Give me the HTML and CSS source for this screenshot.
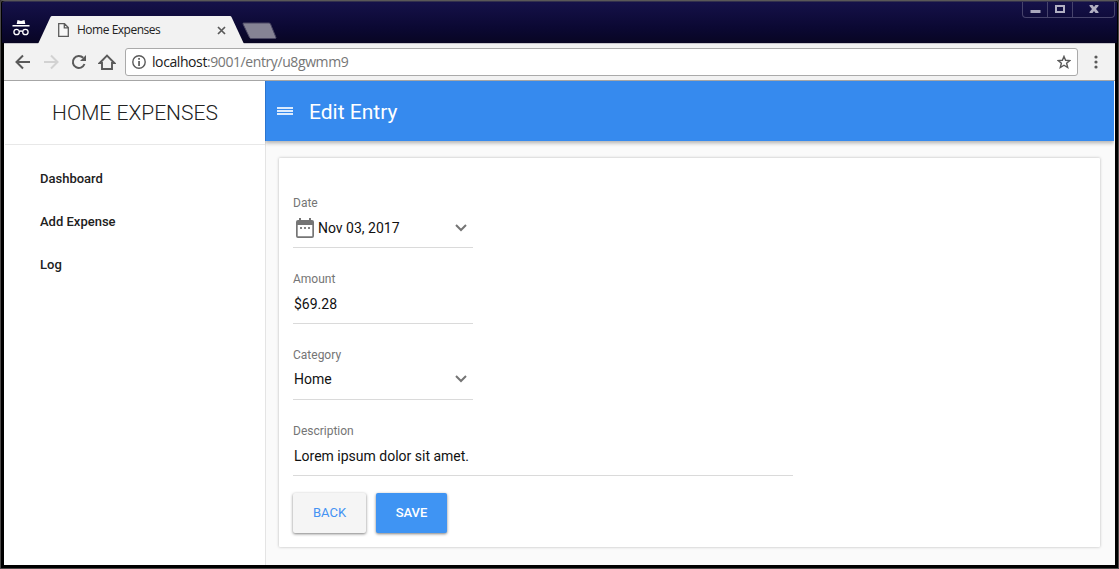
FILE: index.html
```html
<!DOCTYPE html>
<html lang="en">
<head>
<meta charset="utf-8">
<title>Home Expenses</title>
<link rel="stylesheet" href="styles.css">
</head>
<body>
<div class="window">
  <div class="titlebar">
    <svg class="incognito" width="18" height="18" viewBox="0 0 18 18"><path d="M5.500 1l3.500 1 3.500-1 .8 4H4.700zM0.500 6h17v1.500H0.500z" fill="#fff"/><g fill="none" stroke="#fff" stroke-width="1.300"><circle cx="4.600" cy="13" r="2.700"/><circle cx="13.400" cy="13" r="2.700"/><path d="M7.300 12.500q1.700-1 3.400 0"/></g></svg>
    <div class="tab">
      <svg class="tab-shape" width="206" height="28" viewBox="0 0 206 28"><path d="M0 28L12.500 1Q13 0 14 0H192Q193 0 193.500 1L206 28z" fill="#f2f2f2"/></svg>
      <svg class="page-icon" width="11" height="14" viewBox="0 0 11 14"><path d="M.7.700H6.500L10.300 4.500V13.300H.7zM6.300.700V4.800H10.300" fill="#f8f8f8" stroke="#5c5c5c" stroke-width="1.300"/></svg>
      <span class="tab-title">Home Expenses</span>
      <svg class="tab-close" width="9" height="9" viewBox="0 0 9 9"><path d="M1 1l7 7M8 1L1 8" stroke="#5a5a5a" stroke-width="1.700"/></svg>
    </div>
    <svg class="new-tab" width="35" height="18" viewBox="0 0 35 18"><path d="M1.500 1H27Q28 1 28.500 2L34 15.500Q34 16.500 33 16.500H9Q8 16.500 7.500 15.500L1 2Q.800 1 1.500 1z" fill="#858394" stroke="#4a4763"/></svg>
    <div class="controls">
      <span class="control"><svg class="minimize" width="11" height="9" viewBox="0 0 11 9"><path d="M0.500 6h10v3h-10z" fill="#a9a7bd"/></svg></span>
      <span class="control"><svg width="10" height="8" viewBox="0 0 10 8"><path d="M1 1h8v6H1z" fill="none" stroke="#b1afc2" stroke-width="2"/></svg></span>
      <span class="control wide"><svg width="10" height="8" viewBox="0 0 10 8"><path d="M0.500 0h3L5 2l1.500-2h3v1L7 4l2.500 3v1h-3L5 6 3.500 8h-3V7L3 4 .5 1z" fill="#b1afc2"/></svg></span>
    </div>
  </div>
  <div class="toolbar">
    <svg class="back" width="16" height="16" viewBox="0 0 16 16"><path d="M15 8H2M8 1.500L1.500 8 8 14.500" fill="none" stroke="#5a5a5a" stroke-width="2"/></svg>
    <svg class="forward" width="16" height="16" viewBox="0 0 16 16"><path d="M1 8h13M8 1.500L14.500 8 8 14.500" fill="none" stroke="#d2d2d2" stroke-width="2"/></svg>
    <svg class="reload" width="16" height="16" viewBox="0 0 16 16"><path d="M13.500 10A6 6 0 1 1 12.200 3.800" fill="none" stroke="#5a5a5a" stroke-width="2"/><path d="M15 1v6H9z" fill="#5a5a5a"/></svg>
    <svg class="home" width="18" height="17" viewBox="0 0 18 17"><path d="M1.700 9L9 1.700 16.300 9H14V15H4V9z" fill="none" stroke="#5a5a5a" stroke-width="1.900"/></svg>
    <div class="address">
      <svg class="info" width="14" height="14" viewBox="0 0 14 14"><circle cx="7" cy="7" r="6.200" fill="none" stroke="#5a5a5a" stroke-width="1.400"/><path d="M6.200 3h1.700v1.700H6.200zM6.200 6h1.700v5H6.200z" fill="#5a5a5a"/></svg>
      <span class="url"><b>localhost</b>:9001/entry/u8gwmm9</span>
      <svg class="star" width="14" height="14" viewBox="0 0 14 14"><path d="M7 1.400L8.600 5.300 12.800 5.600 9.600 8.300 10.700 12.500 7 10.200 3.300 12.500 4.400 8.300 1.200 5.600 5.400 5.300z" fill="none" stroke="#5a5a5a" stroke-width="1.400"/></svg>
    </div>
    <svg class="more" width="4" height="14" viewBox="0 0 4 14"><g fill="#5a5a5a"><circle cx="2" cy="2" r="1.600"/><circle cx="2" cy="7" r="1.600"/><circle cx="2" cy="12" r="1.600"/></g></svg>
  </div>
  <div class="app">
    <nav class="sidebar">
      <div class="brand"><span class="brand-name">HOME EXPENSES</span></div>
      <a class="nav-link">Dashboard</a>
      <a class="nav-link">Add Expense</a>
      <a class="nav-link">Log</a>
    </nav>
    <main class="main">
      <header class="header">
        <svg class="menu" width="16" height="8" viewBox="0 0 16 8"><path d="M0 0h16v2H0zM0 3h16v2H0zM0 6h16v2H0z" fill="#dcebfd"/></svg>
        <h1 class="page-title">Edit Entry</h1>
      </header>
      <section class="card">
        <div class="field">
          <div class="label">Date</div>
          <div class="value"><svg class="calendar" width="18" height="20" viewBox="0 0 18 20"><path d="M3 0h2v2h8V0h2v2h1q2 0 2 2v14q0 2-2 2H2q-2 0-2-2V4q0-2 2-2h1zM1.700 7v11.300h14.600V7z" fill="#757575" fill-rule="evenodd"/><path d="M4 9h2v2H4zM8 9h2v2H8zM12 9h2v2h-2z" fill="#858585"/></svg><span class="date-text">Nov 03, 2017</span><svg class="chevron" width="12" height="8" viewBox="0 0 12 8"><path d="M1 1l5 5 5-5" fill="none" stroke="#757575" stroke-width="2"/></svg></div>
        </div>
        <div class="field">
          <div class="label">Amount</div>
          <div class="value"><span class="amount-text">$69.28</span></div>
        </div>
        <div class="field">
          <div class="label">Category</div>
          <div class="value raised"><span>Home</span><svg class="chevron" width="12" height="8" viewBox="0 0 12 8"><path d="M1 1l5 5 5-5" fill="none" stroke="#757575" stroke-width="2"/></svg></div>
        </div>
        <div class="field long">
          <div class="label">Description</div>
          <div class="value"><span class="description-text">Lorem ipsum dolor sit amet.</span></div>
        </div>
        <div class="actions"><button class="button secondary">BACK</button><button class="button primary">SAVE</button></div>
      </section>
    </main>
  </div>
</div>
</body>
</html>
```

FILE: styles.css
```css
* { box-sizing: border-box; }
body { margin: 0; background: #3a3836; font-family: Roboto, sans-serif; overflow: hidden; }
svg { display: block; flex: none; }
.window { width: 1119px; height: 569px; padding: 0 3px 3px; background: #000; border: 1px solid #4b4949; border-top-color: #5a5858; border-radius: 3px 3px 0 0; }
.titlebar { height: 42px; margin: 0 -2px; padding-left: 2px; display: flex; background: linear-gradient(#151149, #0b0832 65%, #080523); border-top: 1px solid #33304e; border-radius: 3px 3px 0 0; }
.incognito { margin: 17px 0 0 8px; }
.tab { position: relative; width: 206px; height: 28px; margin: 14px 0 0 8px; display: flex; align-items: center; padding: 0 0 0 20px; }
.tab-shape { position: absolute; left: 0; top: 0; }
.page-icon, .tab-title, .tab-close { position: relative; }
.tab-title { font: 12px/16px "Open Sans", sans-serif; letter-spacing: -.48px; color: #222; width: 140px; margin-left: 8px; white-space: nowrap; }
.new-tab { margin: 20px 0 0 -2px; }
.controls { display: flex; height: 16px; margin: 0 2px 0 auto; border: 1px solid #47446c; border-top: 0; border-radius: 0 0 4px 4px; }
.control { width: 25px; display: flex; justify-content: center; padding-top: 3px; border-right: 1px solid #47446c; }
.control.wide { width: 41px; border: 0; }
.minimize { margin-top: -1px; }
.toolbar { height: 38px; display: flex; background: #f2f2f2; border-top: 1px solid #c8c6cc; border-bottom: 1px solid #a6a6a6; }
.back { margin: 10px 0 0 11px; }
.forward { margin: 10px 0 0 12px; }
.reload { margin: 10px 0 0 12px; }
.home { margin: 10px 0 0 11px; }
.address { width: 953px; height: 28px; margin: 4px 0 0 9px; display: flex; align-items: center; background: #fff; border: 1px solid #aaa; border-radius: 3px; padding: 0 6px; }
.info { margin-right: 6px; }
.url { font: 14px/20px "Open Sans", sans-serif; letter-spacing: -.41px; color: #767676; white-space: nowrap; }
.url b { font-weight: 400; color: #202020; }
.star { margin-left: auto; }
.more { margin: 11px 0 0 16px; }
.app { display: flex; height: 484px; background: #fafafa; border-left: 1px solid #fff; }
.sidebar { width: 261px; flex: none; background: #fff; border-right: 1px solid #e4e4e4; }
.brand { height: 64px; border-bottom: 1px solid #e8e8e8; text-align: center; padding-top: 18px; font-size: 21px; line-height: 28px; color: #212121; font-weight: 300; margin-bottom: 12px; }
.nav-link { display: block; height: 43px; padding-left: 35px; font-size: 13px; line-height: 43px; font-weight: 500; color: #212121; }
.main { flex: 1; margin-left: -1px; min-width: 0; }
.header { width: 849px; height: 60px; padding-left: 11px; display: flex; align-items: center; background: #368aee; border-left: 1px solid #2b75cf; box-shadow: 0 2px 4px rgba(0,0,0,.3); clip-path: inset(0 0 -6px 0); }
.page-title { margin: 2px 0 0 16px; font-size: 21px; line-height: 28px; font-weight: 400; color: #fff; }
.card { width: 821px; height: 389px; margin: 17px 0 0 14px; padding: 37px 14px 0; background: #fff; box-shadow: 0 0 3px rgba(0,0,0,.28); border-radius: 1px; }
.field { width: 180px; height: 76px; }
.field.long { width: 500px; }
.label { height: 16px; font-size: 12px; line-height: 16px; color: #757575; }
.value { height: 37px; padding: 0 0 2px 1px; display: flex; align-items: center; border-bottom: 1px solid #dadada; font-size: 14px; color: #111; }
.value.raised { padding-bottom: 4px; }
.calendar { margin: 0 4px 0 2px; }
.date-text { margin-bottom: 1px; }
.chevron { margin: 0 6px 1px auto; }
.raised .chevron { margin-bottom: 0; }
.actions { display: flex; gap: 10px; margin: -6px 0 0 0; }
.button { width: 73px; height: 40px; border: 0; border-radius: 2px; padding: 0 0 2px; font: 500 13px Roboto, sans-serif; box-shadow: 0 1px 3px rgba(0,0,0,.5); }
.secondary { background: #f5f5f5; color: #4492f3; font-weight: 400; }
.primary { width: 71px; background: #3f94f3; color: #fff; }
```
